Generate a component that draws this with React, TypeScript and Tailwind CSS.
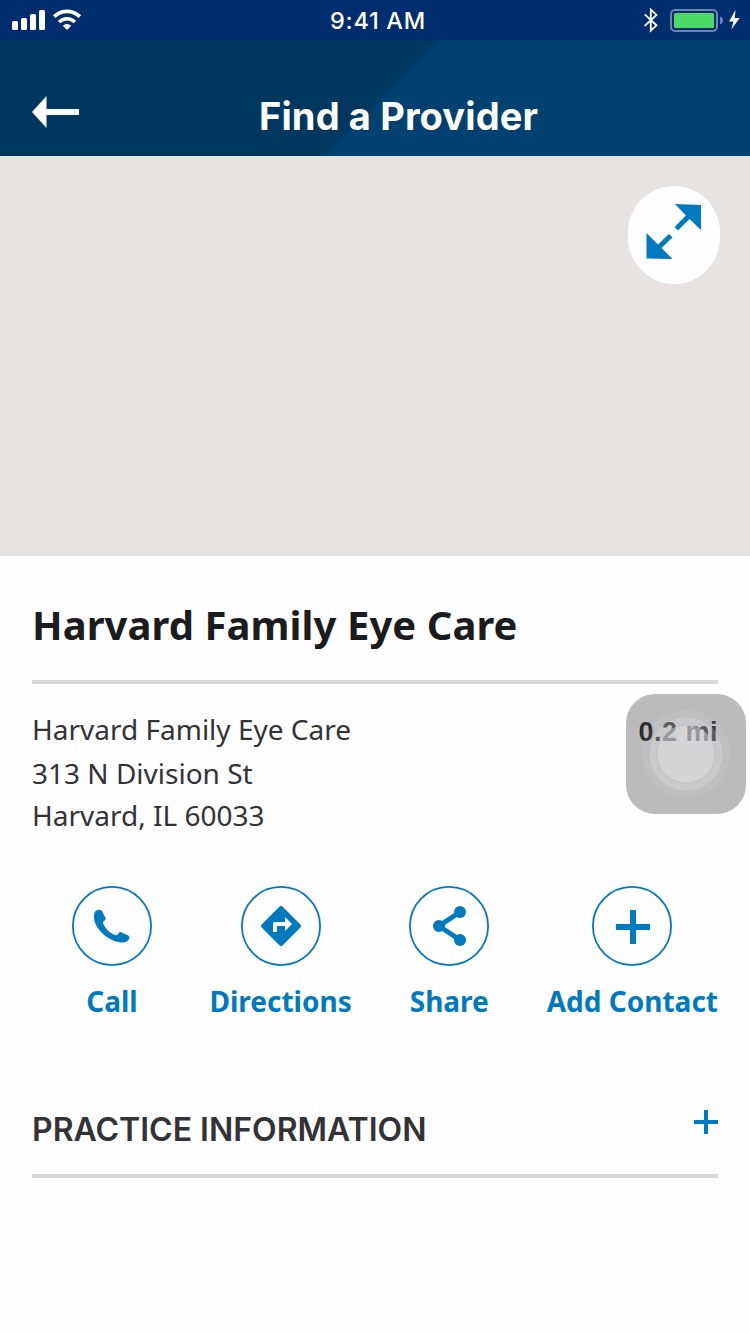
import type { ReactNode } from "react";

function StatusBar() {
  return (
    <div className="flex h-10 items-center bg-[#002d6e] font-['Inter',sans-serif] text-white">
      <svg className="h-10 w-[250px]" viewBox="0 0 250 40" fill="#fff">
        <rect x="12" y="21" width="6" height="9" rx="1.6" />
        <rect x="21" y="18" width="6" height="12" rx="1.6" />
        <rect x="30" y="14" width="6" height="16" rx="1.6" />
        <rect x="39" y="10" width="6" height="20" rx="1.6" />
        <g fill="none" stroke="#fff" strokeWidth="3.6">
          <path d="M54.2 16.6a18.2 18.2 0 0 1 25.6 0" />
          <path d="M59.1 22a11.2 11.2 0 0 1 15.8 0" />
        </g>
        <path d="M67 30l-4.2-4.300a6 6 0 0 1 8.400 0z" />
      </svg>
      <span className="w-[256px] pt-px text-center text-[23.5px] leading-none font-medium tracking-[0.7px]">9:41 AM</span>
      <svg className="h-10 w-[244px]" viewBox="506 0 244 40">
        <path d="M644.7 14.3l11.8 11-5.7 5.3V9.6l5.7 5.3-11.8 11" fill="none" stroke="#fff" strokeWidth="1.8" />
        <rect x="671" y="10" width="46" height="21" rx="4" fill="none" stroke="#6b85b1" strokeWidth="2" />
        <rect x="674" y="13" width="40" height="15" rx="1.5" fill="#4cd964" />
        <path d="M720 16.5c4 1.2 4 6.800 0 8z" fill="#6b85b1" />
        <path d="M735.500 10l-6.500 11.500h4.500l-2.200 8 8.400-11.500h-5z" fill="#fff" />
      </svg>
    </div>
  );
}

function Header() {
  return (
    <header className="flex h-[116px] items-end bg-[linear-gradient(134.500deg,#00375f_0%,#00375f_49.300%,#004170_50.700%,#004170_100%)] bg-[length:762px_116px] bg-no-repeat text-white">
      <svg className="mb-7 ml-8 h-8 w-[47px] shrink-0" viewBox="0 0 47 32" fill="#fff">
        <path d="M0 16L14.500 0v13H47v6H14.500v13z" />
      </svg>
      <h1 className="ml-[180px] pb-[19px] font-['Inter',sans-serif] text-[38px] leading-[42px] font-bold tracking-[0.13px] whitespace-nowrap">
        Find a Provider
      </h1>
    </header>
  );
}

function Action({ label, children }: { label: string; children: ReactNode }) {
  return (
    <button className="flex min-w-20 flex-col items-center text-[#007abf]">
      <svg className="size-20" viewBox="0 0 80 80" fill="currentColor">
        <circle cx="40" cy="40" r="39.100" fill="none" stroke="currentColor" strokeWidth="1.800" />
        {children}
      </svg>
      <span className="mt-4 text-[28px] leading-[38px] font-bold whitespace-nowrap">{label}</span>
    </button>
  );
}

export default function App() {
  return (
    <div className="h-[1334px] w-[750px] overflow-hidden bg-[#fefdff] font-['Noto_Sans',sans-serif]">
      <StatusBar />
      <Header />
      <div className="flex h-[400px] justify-end bg-[#e6e3e0] pt-[30px] pr-[30px]">
        <button className="flex h-[98px] w-[92px] items-center justify-center rounded-[46px] bg-[#fefdff]">
          <svg className="h-[98px] w-[92px]" viewBox="628 186 92 98" fill="#007abf">
            <path d="M675 204l26 1v25l-11.500-11-11.500 11.500-3.500-3.500 11.500-11.500z" />
            <path d="M672.500 259l-26-.5V233l11.500 11.500 11-10.500 3.500 3.500-11 10.500z" />
          </svg>
        </button>
      </div>
      <main className="px-8 text-[#333235]">
        <h2 className="h-32 border-b-4 border-[#d9d8d9] pt-[42px] text-[40px] leading-[54px] font-bold tracking-[0.06px] whitespace-nowrap text-[#1c1b1e]">
          Harvard Family Eye Care
        </h2>
        <div className="flex h-[202px] justify-between pt-6">
          <address className="text-[28px] leading-[43px] whitespace-nowrap not-italic">
            <p>Harvard Family Eye Care</p>
            <p className="pt-px leading-[42px]">313 N Division St</p>
            <p>Harvard, IL 60033</p>
          </address>
          <div className="relative">
            <span className="block pt-[3px] font-['Liberation_Sans',sans-serif] text-[27px] leading-[42px] font-bold tracking-[0.5px] whitespace-nowrap text-[#1c1b1e]">0.2 mi</span>
            <svg className="absolute -top-[14px] -right-7 size-[120px]" viewBox="0 0 120 120">
              <rect width="120" height="120" rx="29" fill="#4a484b" fillOpacity=".37" />
              <circle cx="60" cy="60" r="44" fill="#fff" fillOpacity=".07" />
              <circle cx="60" cy="60" r="37" fill="#fff" fillOpacity=".16" stroke="#aaa8ab" strokeOpacity=".25" />
              <circle cx="60" cy="60" r="29" fill="#e2e1e3" fillOpacity=".45" stroke="#aaa8ab" strokeOpacity=".35" />
            </svg>
          </div>
        </div>
        <div className="flex h-[204px] items-start justify-between pl-10">
          <Action label="Call">
            <path d="M26.500 24c2-.300 3.400 0 4.200 1.500l3.500 6.500c.7 1.500-.2 2.500-1.500 3.300-1 .7-1.500 1.700-.8 3 3 5.700 7 9.500 12.500 11.500 1.600.6 2.500.1 3.300-1.300.8-1.500 2-2.300 3.700-1.500l7 3.200c1.300.6 1.500 1.900 1 3.300-1.200 3-4.500 4.200-8.400 3.800C36 56 21 41.500 22 29.500c.3-3.500 1.800-5.100 4.500-5.500z" transform="translate(1.300 .8) scale(.94 .97)" />
          </Action>
          <Action label="Directions">
            <path transform="translate(16 16) scale(2)" d="M21.710 11.290l-9-9a.996.996 0 0 0-1.410 0l-9 9a.996.996 0 0 0 0 1.410l9 9c.39.39 1.020.39 1.410 0l9-9a.996.996 0 0 0 0-1.410zM14 14.500V12h-4v3H8v-4c0-.55.45-1 1-1h5V7.500l3.500 3.500-3.500 3.500z" />
          </Action>
          <Action label="Share">
            <path d="M51 26L30 40l21 14" fill="none" stroke="currentColor" strokeWidth="5" />
            <circle cx="51" cy="26" r="6" />
            <circle cx="30" cy="40" r="6" />
            <circle cx="51" cy="54" r="6" />
          </Action>
          <Action label="Add Contact">
            <path d="M38 24h6v14h14v6H44v14h-6V44H24v-6h14z" />
          </Action>
        </div>
        <section className="flex h-[88px] justify-between border-b-4 border-[#d9d8d9]">
          <h3 className="pt-[19px] font-['Inter',sans-serif] text-[32px] leading-[42px] font-semibold whitespace-nowrap">PRACTICE INFORMATION</h3>
          <svg className="mt-[19.500px] size-6" viewBox="0 0 24 24" fill="#007abf">
            <path d="M10 0h4v10h10v4H14v10h-4V14H0v-4h10z" />
          </svg>
        </section>
      </main>
    </div>
  );
}
